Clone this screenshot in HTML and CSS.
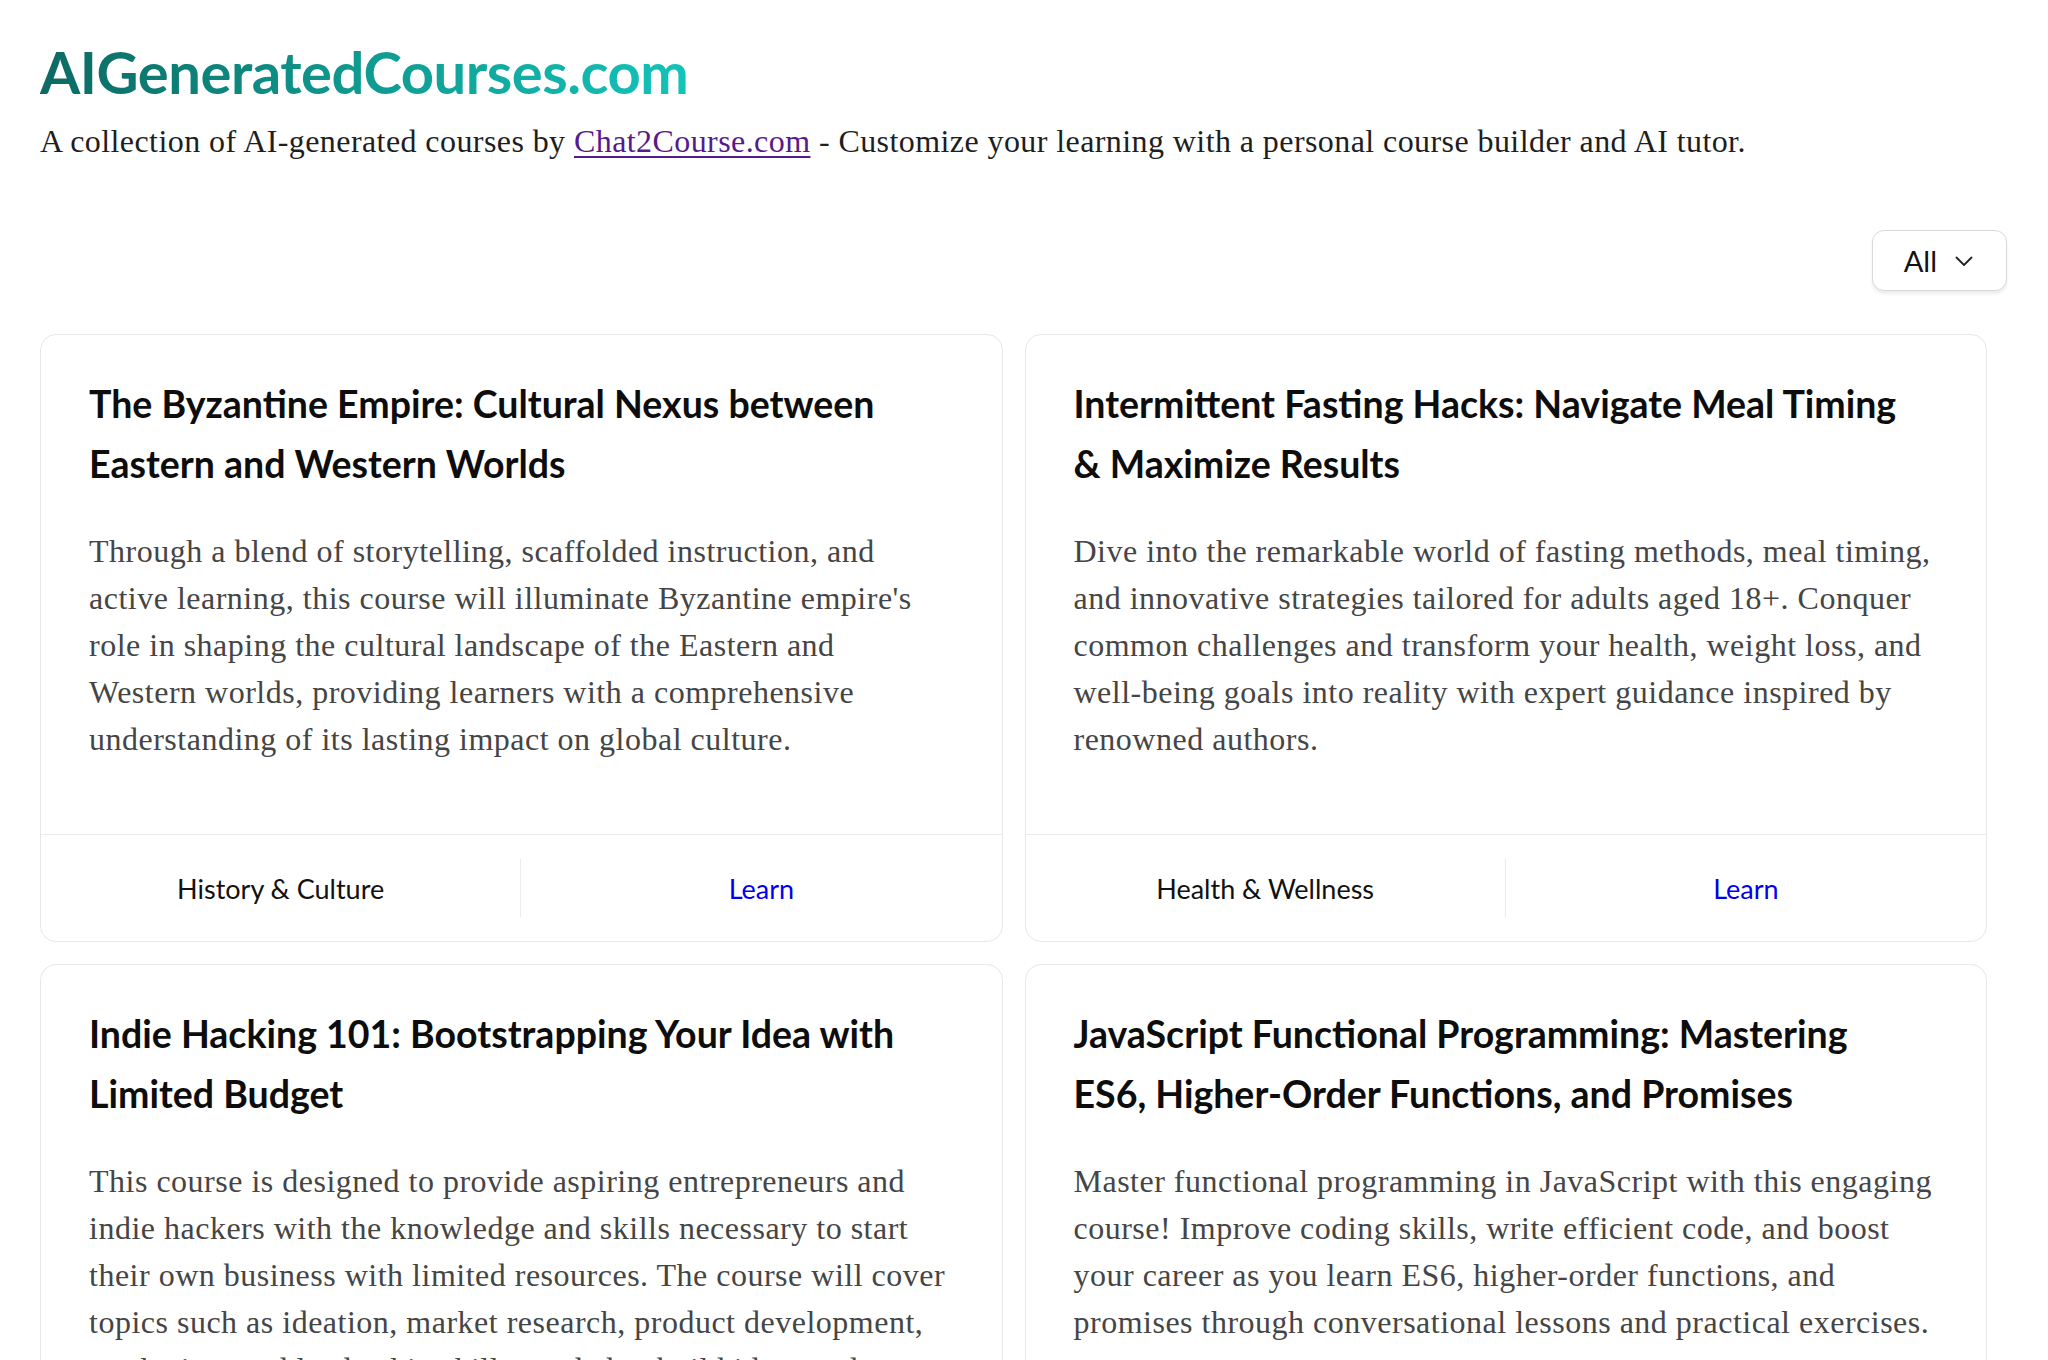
FILE: index.html
```html
<!DOCTYPE html>
<html lang="en">
<head>
<meta charset="utf-8">
<title>AIGeneratedCourses.com</title>
<link rel="stylesheet" href="styles.css">
</head>
<body>
<main class="page">
  <header class="site-header">
    <h1 class="site-title">AIGeneratedCourses.com</h1>
    <p class="site-intro">A collection of AI-generated courses by <a href="#" class="intro-link">Chat2Course.com</a> - Customize your learning with a personal course builder and AI tutor.</p>
  </header>

  <div class="toolbar">
    <button class="filter-select" type="button">
      <span class="filter-label">All</span>
      <svg class="filter-chevron" width="18" height="12" viewBox="0 0 18 12" aria-hidden="true"><path d="M1.5 2.5 L9 10 L16.5 2.5" fill="none" stroke="#222" stroke-width="1.8" stroke-linecap="round" stroke-linejoin="round"/></svg>
    </button>
  </div>

  <section class="course-grid">
    <article class="course-card">
      <div class="card-body">
        <h2 class="card-title">The Byzantine Empire: Cultural Nexus between Eastern and Western Worlds</h2>
        <p class="card-desc">Through a blend of storytelling, scaffolded instruction, and active learning, this course will illuminate Byzantine empire's role in shaping the cultural landscape of the Eastern and Western&nbsp;worlds, providing learners with a comprehensive understanding of its lasting impact on global culture.</p>
      </div>
      <div class="card-footer">
        <span class="card-cat">History &amp; Culture</span>
        <a href="#" class="card-learn">Learn</a>
      </div>
    </article>

    <article class="course-card">
      <div class="card-body">
        <h2 class="card-title">Intermittent Fasting Hacks: Navigate Meal Timing &amp;&nbsp;Maximize Results</h2>
        <p class="card-desc">Dive into the remarkable world of fasting methods, meal timing, and innovative strategies tailored for adults aged 18+. Conquer common challenges and transform your health, weight loss, and well-being goals into reality with expert guidance inspired by renowned authors.</p>
      </div>
      <div class="card-footer">
        <span class="card-cat">Health &amp; Wellness</span>
        <a href="#" class="card-learn">Learn</a>
      </div>
    </article>

    <article class="course-card">
      <div class="card-body">
        <h2 class="card-title">Indie Hacking 101: Bootstrapping Your Idea with Limited Budget</h2>
        <p class="card-desc">This course is designed to provide aspiring entrepreneurs and indie hackers with the knowledge and skills necessary to start their own business with limited resources. The course will cover topics such as ideation, market research, product development, marketing, and leadership skills needed to build ideas and grow them.</p>
      </div>
      <div class="card-footer">
        <span class="card-cat">Business &amp; Entrepreneurship</span>
        <a href="#" class="card-learn">Learn</a>
      </div>
    </article>

    <article class="course-card">
      <div class="card-body">
        <h2 class="card-title">JavaScript Functional Programming: Mastering ES6,&nbsp;Higher-Order Functions, and Promises</h2>
        <p class="card-desc">Master functional programming in JavaScript with this engaging course! Improve coding skills, write efficient code, and boost your career as you learn ES6, higher-order functions, and promises through conversational lessons and practical exercises.</p>
      </div>
      <div class="card-footer">
        <span class="card-cat">Technology &amp; Programming</span>
        <a href="#" class="card-learn">Learn</a>
      </div>
    </article>
  </section>
</main>
</body>
</html>
```

FILE: styles.css
```css
* {
  box-sizing: border-box;
}

html, body {
  margin: 0;
  padding: 0;
  background: #ffffff;
}

body {
  font-family: "Lato", "Noto Sans", sans-serif;
  color: #111111;
}

.page {
  padding: 37px 41px 0 40px;
}

.site-title {
  margin: 0;
  font-family: "Lato", sans-serif;
  font-weight: 700;
  font-size: 58px;
  line-height: 70px;
  letter-spacing: -0.5px;
  display: inline-block;
  background: linear-gradient(90deg, #0c6a63 0%, #0f9a90 50%, #14c3b9 100%);
  -webkit-background-clip: text;
  background-clip: text;
  color: transparent;
}

.site-intro {
  margin: 13px 0 0 0;
  font-family: "Liberation Serif", "Times New Roman", serif;
  font-size: 32px;
  line-height: 42px;
  letter-spacing: 0.42px;
  color: #1e1e1e;
}

.intro-link {
  color: #551a8b;
  text-decoration: underline;
  text-underline-offset: 4px;
  text-decoration-thickness: 2px;
}

.toolbar {
  margin-top: 68px;
  display: flex;
  justify-content: flex-end;
}

.filter-select {
  display: flex;
  align-items: center;
  gap: 18px;
  height: 61px;
  padding: 0 33px 0 31px;
  background: #ffffff;
  border: 1px solid #d9d9d9;
  border-radius: 12px;
  box-shadow: 0 3px 3px rgba(0, 0, 0, 0.07);
  font-family: "Lato", sans-serif;
  font-size: 29px;
  color: #111111;
  cursor: pointer;
}

.filter-chevron {
  display: block;
}

.course-grid {
  margin: 43px 20px 0 0;
  display: grid;
  grid-template-columns: 1fr 1fr;
  column-gap: 22px;
  row-gap: 22px;
}

.course-card {
  display: flex;
  flex-direction: column;
  background: #ffffff;
  border: 1px solid #e7e7e7;
  border-radius: 16px;
  overflow: hidden;
}

.card-body {
  flex: 1;
  padding: 39px 48px 71px 48px;
}

.card-title {
  margin: 0;
  font-family: "Lato", sans-serif;
  font-weight: 700;
  font-size: 37.5px;
  line-height: 60px;
  color: #0d0d0d;
}

.card-desc {
  margin: 34px 0 0 0;
  font-family: "Liberation Serif", "Times New Roman", serif;
  font-size: 32px;
  line-height: 47px;
  letter-spacing: 0.5px;
  color: #454545;
}

.card-footer {
  display: grid;
  grid-template-columns: 1fr 1fr;
  padding: 24px 0;
  border-top: 1px solid #ececec;
}

.card-cat,
.card-learn {
  display: flex;
  align-items: center;
  justify-content: center;
  height: 58px;
  font-family: "Lato", sans-serif;
  font-size: 27px;
}

.card-cat {
  color: #111111;
  border-right: 1px solid #ececec;
}

.card-learn {
  color: #0000ee;
  text-decoration: none;
}
```
